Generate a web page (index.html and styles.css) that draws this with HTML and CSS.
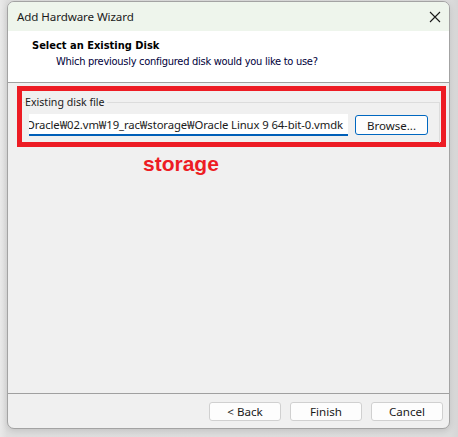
FILE: index.html
```html
<!DOCTYPE html>
<html>
<head>
<meta charset="utf-8">
<link rel="stylesheet" href="styles.css">
</head>
<body>
<div class="desktop">
  <div class="window">
    <div class="titlebar">
      <span class="title">Add Hardware Wizard</span>
      <svg class="close" width="12" height="12" viewBox="0 0 12 12"><path d="M1 1 L11 11 M11 1 L1 11" stroke="#1a1a1a" stroke-width="1.1" fill="none"/></svg>
    </div>
    <div class="header">
      <div class="h-title">Select an Existing Disk</div>
      <div class="h-sub">Which previously configured disk would you like to use?</div>
    </div>
    <div class="content">
      <div class="redbox">
        <fieldset class="group">
          <legend class="legend">Existing disk file</legend>
          <div class="row">
            <div class="input"><span class="path">D:₩Oracle₩02.vm₩19_rac₩storage₩Oracle Linux 9 64-bit-0.vmdk</span></div>
            <div class="browse">Browse...</div>
          </div>
        </fieldset>
      </div>
      <div class="note">storage</div>
    </div>
    <div class="footer">
      <div class="btn">&lt; Back</div>
      <div class="btn">Finish</div>
      <div class="btn">Cancel</div>
    </div>
  </div>
</div>
</body>
</html>
```
FILE: styles.css
```css
html, body {
  margin: 0;
  padding: 0;
}
body {
  width: 458px;
  height: 437px;
  overflow: hidden;
  background: linear-gradient(to right, #e9e9e9 0px, #dedede 7px, #dcdcdc 450px, #d6d6d6 458px);
  font-family: "Noto Sans", "Liberation Sans", sans-serif;
}
.desktop {
  padding: 1px 0 0 7px;
}
.window {
  width: 441px;
  height: 426px;
  border: 1px solid #a3a3a3;
  border-radius: 7px;
  overflow: hidden;
  background: #f0f0f0;
  display: flex;
  flex-direction: column;
  box-shadow: 0 2px 6px rgba(0,0,0,0.12);
}
.titlebar {
  height: 29px;
  flex: none;
  background: #eef5ec;
  display: flex;
  align-items: center;
  justify-content: space-between;
  padding: 0 8px 0 9px;
}
.title {
  font-size: 11.6px;
  color: #1a1a1a;
  font-family: "Noto Sans", sans-serif;
  letter-spacing: -0.1px;
}
.close {
  display: block;
}
.header {
  flex: none;
  background: #ffffff;
  border-bottom: 1px solid #a0a0a0;
  box-sizing: border-box;
  height: 52px;
  padding: 8px 0 0 24px;
  font-family: "DejaVu Sans Condensed", "DejaVu Sans", sans-serif;
  font-size: 11px;
  color: #000;
}
.h-title {
  font-weight: bold;
  line-height: 14px;
}
.h-sub {
  line-height: 14px;
  margin-top: 2px;
  padding-left: 24px;
  color: #00003a;
  letter-spacing: -0.27px;
}
.content {
  flex: 1;
  padding: 3px 3px 0 9px;
}
.redbox {
  border: 5px solid #ed1c24;
  height: 51px;
  padding: 0 0 0 1px;
}
.group {
  margin: 0;
  padding: 0 0 0 3px;
  border: none;
  border-top: 1px solid #dcdcdc;
  border-right: 1px solid #dcdcdc;
  margin-top: 4px;
  margin-right: 1px;
  height: 48px;
  box-sizing: border-box;
}
.legend {
  font-family: "Noto Sans", sans-serif;
  font-size: 10.6px;
  color: #1a1a1a;
  padding: 0 2px 0 0;
  margin-left: -1px;
  line-height: 14px;
}
.row {
  display: flex;
  align-items: flex-start;
  margin-top: 5px;
  margin-left: 3px;
}
.input {
  width: 319px;
  height: 22px;
  box-sizing: border-box;
  background: #ffffff;
  border-bottom: 2px solid #005fb8;
  overflow: hidden;
  display: flex;
  justify-content: flex-end;
  align-items: center;
  padding-right: 5px;
  font-family: "Noto Sans", sans-serif;
  font-size: 11.3px;
  color: #1a1a1a;
  white-space: nowrap;
  letter-spacing: -0.1px;
}
.path {
  flex: none;
}
.browse {
  margin-left: 7px;
  margin-top: 1px;
  width: 73px;
  height: 20px;
  box-sizing: border-box;
  border: 1px solid #0067c0;
  border-radius: 3px;
  background: #fdfdfd;
  display: flex;
  align-items: center;
  justify-content: center;
  font-size: 11.5px;
  color: #1a1a1a;
}
.note {
  margin: 5px 0 0 126px;
  font-family: "Liberation Sans", Arial, sans-serif;
  font-weight: bold;
  font-size: 21px;
  line-height: 24px;
  color: #ed1c24;
}
.footer {
  flex: none;
  border-top: 1px solid #a0a0a0;
  display: flex;
  justify-content: flex-end;
  align-items: flex-start;
  padding: 8px 6px 0 0;
  box-sizing: border-box;
  height: 35px;
  gap: 9px;
}
.btn {
  width: 72px;
  height: 19px;
  box-sizing: border-box;
  border: 1px solid #d0d0d0;
  border-radius: 3px;
  background: #fdfdfd;
  display: flex;
  align-items: center;
  justify-content: center;
  font-size: 11.6px;
  color: #1a1a1a;
  font-family: "Noto Sans", sans-serif;
}
```
